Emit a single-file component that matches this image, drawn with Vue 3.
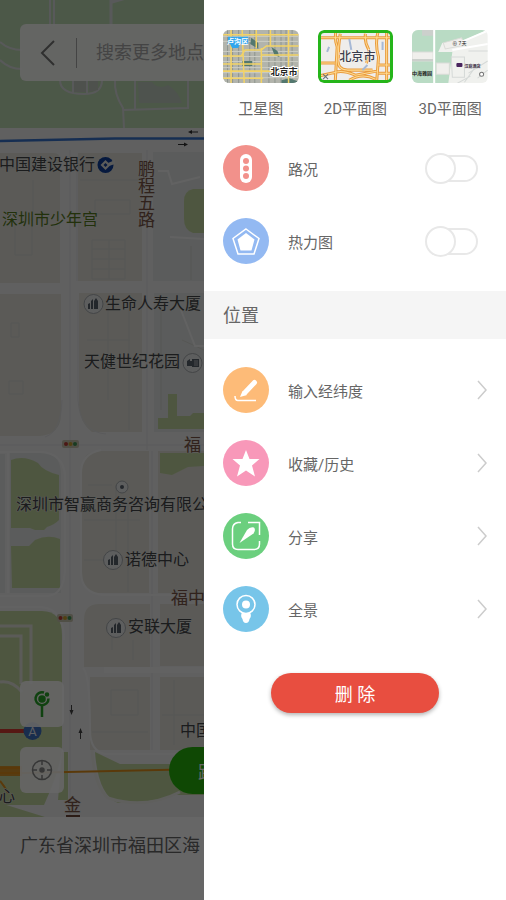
<script setup>
import { ref } from 'vue'

const layer = ref('flat')
const traffic = ref(false)
const heat = ref(false)

const satelliteGrid = {
  x: [4, 9, 15, 26, 31, 45, 51, 57, 62, 68],
  y: [6, 11, 21, 26, 31, 37, 42, 47]
}
</script>

<template>
  <div class="screen">
    <main class="map-pane">
      <div class="map-area">
        <svg class="map" role="img" aria-label="地图">
          <rect width="100%" height="100%" fill="#f0f0f1" />

          <g fill="#bedcb4">
            <rect width="100%" height="128" />
          </g>
          <g fill="none" stroke="#dddfe0" stroke-width="2">
            <path d="M50 0V26M54 0V26M0 42Q9 50 22 50M0 60Q9 69 22 69" />
            <path d="M111 0V26M112 2L126-2" stroke-width="3" />
            <path d="M60 80Q60 94 84 94Q102 94 102 80M73 80V93M87 80V93M135 80V109M115 80Q114 94 123 108L124 128M123 110L188 108V80" />
          </g>
          <path d="M138 82H152Q158 90 168 85Q178 91 182 103H139Z" fill="#c3cfc2" />
          <path d="M74 81H86V92H74ZM89 81H98V90L89 92Z" fill="#c4cac1" />
          <path d="M0 141L115 138.500H206" fill="none" stroke="#3974cc" stroke-width="2.500" />
          <g stroke="#333" fill="#333">
            <path d="M190 132H198M178 144.500H186" />
            <path d="M188 132l4-2v4ZM188 144.500l-4-2v4Z" stroke="none" />
          </g>

          <g fill="#e3e2d9">
            <path d="M0 153H54Q60 153 60 160V283H0ZM78 153H142V281H78Z" />
            <path d="M0 294H61V414Q61 434 40 436H0ZM79 293H142V432H92Q79 422 79 404Z" />
            <path d="M99 451H149V593H99Q82 593 82 573V470Q82 451 99 451Z" />
            <path d="M158 451H206V593H158ZM160 604H206V666H160ZM99 604H150V667H84V620Q84 604 99 604ZM90 677H150V750H90ZM160 677H206V750H160Z" />
          </g>
          <g fill="#e3e6e5">
            <path d="M153 152H206V281H153ZM154 293H206V432H154Z" />
            <path d="M10 453H45Q61 455 61 475V593H10ZM0 454H5V593H0Z" />
          </g>
          <g fill="#c4d8a0">
            <path d="M11 460Q24 455 38 463Q43 471 59 475V520Q54 525 47 527L44 530H35L30 528H11ZM11 546H29L35 540Q48 534 60 539V588H12Z" />
            <path d="M206 189H193Q184 191 184 201V219Q184 230 193 233H206Z" />
            <path d="M168 394H177V416H190L193 413H206V429H158V418H168ZM160 453H206V466L188 467L172 475L160 473Z" />
            <path d="M0 611H42Q62 611 62 635V745Q62 765 44 805H0Z" />
            <path d="M95 752L120 764H206V795H175Q150 803 118 803Q98 795 95 752ZM62 752H68V800H58ZM0 803L45 817H0Z" />
          </g>
          <path d="M0 626H31V684M0 636H21V684M0 682Q12 680 22 692" fill="none" stroke="#e3e4dd" stroke-width="3" />

          <g fill="none" stroke="#d7d8d3">
            <path d="M33 180V220H15V255H32V220M0 168H34M95 200H130V214H95ZM92 240H125V279H92ZM92 249H125M92 259H125M92 269H125M109 240V279M80 180H140" />
            <path d="M11 323H19V337H11ZM9 381H23V394H9ZM108 300V400M129 300V430M87 340H130" />
            <path d="M88 485H112M116 485V565M128 500V592M84 520H140M84 560H115" />
            <path d="M191 246V280M161 300V410M182 340L204 350" />
            <path d="M111 690H138V715H111ZM112 620V650M133 640V660M92 732H148M162 715H206M174 680V745" />
          </g>
          <g fill="none" stroke="#f5f5f6" stroke-width="2">
            <path d="M70 150V820M147 150V450M152 451V750M77 160V281M78 300V400Q80 432 106 434M62 400Q61 432 45 437M0 445H206" stroke="#e2e2e4" stroke-width="1" />
            <path d="M8 453V593M0 452H40Q63 453 65 475V570Q64 594 48 596H0M101 450Q81 454 81 473V572Q81 594 105 595H206" />
            <path d="M0 607H40Q64 608 64 640M83 668Q90 674 90 730Q90 751 105 754H206M158 171H168L172 184L200 177M170 237L206 239M181 310L195 346H206" />
            <path d="M104 670H206" stroke-width="6" stroke="#f4f4f5" />
          </g>
          <path d="M92 750Q94 786 108 798Q145 810 180 792" fill="none" stroke="#edeee9" stroke-width="3" />

          <g stroke="#444" fill="#444">
            <path d="M71.500 705V713M80.500 731V739" />
            <path d="M71.500 715l-2-5h4ZM80.500 728l-2 5h4Z" stroke="none" />
          </g>
          <path d="M0 771H22" stroke="#d9962c" stroke-width="10" />
          <path d="M0 768H22M0 773H22L206 769" fill="none" stroke="#e0901a" stroke-width="2" />
          <path d="M0 781Q5 787 8 793" fill="none" stroke="#e0901a" stroke-width="2" />
          <path d="M0 731H28" stroke="#d83c32" stroke-width="4" />
          <circle cx="32.500" cy="731" r="9" fill="#3f70c0" />
          <text x="32.500" y="736" class="marker">A</text>

          <g>
            <g fill="#c9c5ae">
              <rect x="62" y="440" width="17" height="8" rx="2" />
              <rect x="57" y="614" width="16" height="8" rx="2" />
            </g>
            <g fill="#bc3d35"><circle cx="66" cy="444" r="2" /><circle cx="60.500" cy="618" r="2" /></g>
            <g fill="#caa02d"><circle cx="70.500" cy="444" r="2" /><circle cx="65" cy="618" r="2" /></g>
            <g fill="#3f9455"><circle cx="75" cy="444" r="2" /><circle cx="69.500" cy="618" r="2" /></g>
          </g>

          <g fill="#e9eaec" stroke="#a8acb0">
            <circle cx="93.500" cy="304" r="9.500" />
            <circle cx="192.500" cy="363" r="9.500" />
            <circle cx="113" cy="560" r="9.500" />
            <circle cx="116" cy="628" r="9.500" />
            <circle cx="122" cy="487" r="6" />
          </g>
          <g fill="#59616d">
            <circle cx="122" cy="487" r="2" />
            <path d="M88 304l2-1v6h-2zM91 301l2-2v10h-2zM94 309v-8l2-3 2 3v8z" />
            <path d="M108 560l2-1v6h-2zM111 557l2-2v10h-2zM114 565v-8l2-3 2 3v8z" />
            <path d="M111 628l2-1v6h-2zM114 625l2-2v10h-2zM117 633v-8l2-3 2 3v8z" />
            <path d="M187 361l3-2v2h2v5h-5zM192 359h7v8h-7z" />
          </g>
          <path d="M194 361h4M194 363h4M194 365h4" stroke="#b9bdc1" />

          <g>
            <circle cx="105.500" cy="165" r="8" fill="#0f3f9c" />
            <path d="M105.500 160l5 5-5 5-5-5Z" fill="#e6e6e2" />
            <path d="M105.500 163l2 2-2 2-2-2Z" fill="#0f3f9c" />
            <path d="M108 163L115 160V164L109 166Z" fill="#e6e6e2" />
          </g>

          <g class="labels">
            <text x="-1" y="170">中国建设银行</text>
            <text x="2" y="225" class="park">深圳市少年宫</text>
            <text x="105" y="309">生命人寿大厦</text>
            <text x="84" y="367">天健世纪花园</text>
            <text x="16" y="510">深圳市智赢商务咨询有限公</text>
            <text x="125" y="565">诺德中心</text>
            <text x="128" y="632">安联大厦</text>
            <text x="180" y="736">中国</text>
            <text x="-1" y="802">心</text>
            <g class="street">
              <text x="145" y="160" class="vertical">鹏程五路</text>
              <text x="184" y="451" class="avenue">福</text>
              <text x="171" y="604" class="avenue">福中</text>
              <text x="64" y="811" class="avenue">金</text>
              <path d="M66 816H80" stroke="#6b4638" stroke-width="2" />
            </g>
          </g>
        </svg>

        <form class="search" @submit.prevent>
          <button class="back" type="button" aria-label="返回">
            <svg viewBox="0 0 16 26"><path d="M14 1L2 13L14 25" /></svg>
          </button>
          <input type="text" aria-label="搜索更多地点" placeholder="搜索更多地点" />
        </form>

        <div class="tools">
          <button type="button" aria-label="地点">
            <svg viewBox="0 0 24 30" class="pin">
              <path d="M14 3.500A6.500 6.500 0 1 0 18.500 9.500" />
              <circle cx="12" cy="10" r="2.500" class="fill" />
              <path d="M12 17V28" />
              <circle cx="17" cy="5.500" r="1" class="fill" />
            </svg>
          </button>
          <button type="button" aria-label="定位">
            <svg viewBox="0 0 24 24" class="locate">
              <circle cx="12" cy="12" r="9.500" />
              <circle cx="12" cy="12" r="2" class="fill" />
              <path d="M12 3V7M12 17V21M3 12H7M17 12H21" />
            </svg>
          </button>
        </div>
        <button type="button" class="route">路</button>
      </div>
      <p class="address">广东省深圳市福田区海</p>
      <div class="scrim"></div>
    </main>

    <aside class="drawer">
      <div class="layers">
        <button type="button" class="layer" :aria-pressed="layer === 'satellite'" @click="layer = 'satellite'">
          <span class="thumb" :class="{ active: layer === 'satellite' }">
            <svg viewBox="0 0 75 53" preserveAspectRatio="xMidYMid slice">
              <rect width="75" height="53" fill="#b2b4ac" />
              <g fill="#8f958f">
                <rect v-for="x in satelliteGrid.x" :key="x" :x="x" y="0" width="1" height="53" />
              </g>
              <g fill="#cccdc4">
                <rect v-for="y in satelliteGrid.y" :key="y" x="0" :y="y" width="75" height="1" />
              </g>
              <g fill="#53786f">
                <path d="M19 31h10v5h-10zM48 17l6 4 2 6-5-2zM58 50l8-2 8 3v2H58zM28 8l7 5v6l-8-5z" />
              </g>
              <g fill="none" stroke="#f3d366" stroke-width="1.500">
                <path d="M0 5H75M0 26H18L22 20H38L43 16H75M0 41H75M0 48H40M19 0L21 53M8 0V53M38 18V53M33 0V18M47 0V16M65 0V53M0 34H38M38 25H75" />
              </g>
              <path d="M5 7h20v7h-8l-2 4h-6l-2-4H5z" fill="#31a6ed" />
              <text x="4" y="14" class="tiny water">卢沟区</text>
              <text x="47" y="45" class="city">北京市</text>
            </svg>
          </span>
          卫星图
        </button>
        <button type="button" class="layer" :aria-pressed="layer === 'flat'" @click="layer = 'flat'">
          <span class="thumb" :class="{ active: layer === 'flat' }">
            <svg viewBox="0 0 75 53" preserveAspectRatio="xMidYMid slice">
              <rect width="75" height="53" fill="#efedeb" />
              <g fill="none" stroke="#e99b3e" stroke-width="3">
                <path d="M18 0Q16 9 19 17L17 53M3 8H75M0 33H17M0 46L18 42Q25 40 37 45L58 41M47 4Q46 12 50 19Q51 27 48 33M60 0Q56 13 60 27L58 53M22 4Q20 16 20 30Q19 39 29 40H54M68 0V53M60 35H75M60 43H75M31 50Q44 42 57 49" />
              </g>
              <g fill="none" stroke="#ffdb91" stroke-width="1">
                <path d="M18 0Q16 9 19 17L17 53M3 8H75M0 33H17M0 46L18 42Q25 40 37 45L58 41M47 4Q46 12 50 19Q51 27 48 33M60 0Q56 13 60 27L58 53M22 4Q20 16 20 30Q19 39 29 40H54M68 0V53M60 35H75M60 43H75M31 50Q44 42 57 49" />
              </g>
              <path d="M31 9l2 11M49 35l-5 5M11 17l-2 5M64 12v8" stroke="#a6b8d5" stroke-width="2" />
              <path d="M5 44l5 5m0-5l-5 5" stroke="#687078" />
              <text x="39" y="31" class="capital">北京市</text>
            </svg>
          </span>
          2D平面图
        </button>
        <button type="button" class="layer" :aria-pressed="layer === 'solid'" @click="layer = 'solid'">
          <span class="thumb" :class="{ active: layer === 'solid' }">
            <svg viewBox="0 0 75 53" preserveAspectRatio="xMidYMid slice">
              <rect width="75" height="53" fill="#f0f1ee" />
              <path d="M0 0H75L53 10L30 13L26 22H40L36 53H0Z" fill="#b9dbc4" />
              <path d="M0 22H21V31H0ZM24 33H37V44H24ZM31 13L49 8L53 15L33 19Z" fill="#f0efec" stroke="#dadbd7" />
              <path d="M10 0H22V6H10ZM0 31H21V29H0Z" fill="#ccd0cc" />
              <g fill="none" stroke="#fff" stroke-width="2"><path d="M22 0V53M49 12L75 1M40 20L75 14" /></g>
              <g fill="none" stroke="#d5d9d7"><path d="M39 27H52V47H40ZM56 21H75M56 43L75 31M52 52L62 38M65 48L75 40M45 53L58 46" /></g>
              <rect x="44" y="33" width="6" height="4" rx="1" fill="#49255e" />
              <text x="40" y="15" class="tiny">⊕ 7天</text>
              <text x="52" y="38" class="micro">汉庭酒店</text>
              <text x="0" y="45" class="tiny estate">中海雅园</text>
              <circle cx="69" cy="44" r="2" fill="#fff" stroke="#777" />
            </svg>
          </span>
          3D平面图
        </button>
      </div>

      <ul class="list switches">
        <li>
          <label class="row">
            <svg class="icon red" viewBox="0 0 46 46">
              <rect x="17" y="9" width="12" height="29" rx="6" fill="#fff" />
              <g class="hole"><circle cx="23" cy="16" r="3" /><circle cx="23" cy="23.500" r="3" /><circle cx="23" cy="31" r="3" /></g>
            </svg>
            <span class="name">路况</span>
            <input v-model="traffic" class="toggle" type="checkbox" role="switch" />
          </label>
        </li>
        <li>
          <label class="row">
            <svg class="icon blue" viewBox="0 0 46 46">
              <path d="M23 11L36 20.500L31 36H15L10 20.500Z" fill="none" stroke="#fff" stroke-width="1.500" />
              <path d="M23 15L31.500 21.500L28.500 32.500H17.500L14.500 21.500Z" fill="#fff" />
            </svg>
            <span class="name">热力图</span>
            <input v-model="heat" class="toggle" type="checkbox" role="switch" />
          </label>
        </li>
      </ul>

      <h2 class="section">位置</h2>

      <ul class="list links">
        <li>
          <button type="button" class="row">
            <svg class="icon orange" viewBox="0 0 46 46">
              <path d="M22 25.500L31.500 15.500" fill="none" stroke="#fff" stroke-width="5" stroke-linecap="round" />
              <path d="M19.500 24L24 28L17 30Z" fill="#fff" />
              <path d="M12 29Q12 33.500 15 33.500H33" fill="none" stroke="#fff" stroke-width="1.500" />
            </svg>
            <span class="name">输入经纬度</span>
            <svg class="arrow" viewBox="0 0 10 20"><path d="M1 1L9 10L1 19" /></svg>
          </button>
        </li>
        <li>
          <button type="button" class="row">
            <svg class="icon pink" viewBox="0 0 46 46">
              <path d="M23 10L26.500 19H36.500L29 25.500L32 36.500L23 30.500L14 36.500L17 25.500L9.500 19H19.500Z" fill="#fff" />
            </svg>
            <span class="name">收藏/历史</span>
            <svg class="arrow" viewBox="0 0 10 20"><path d="M1 1L9 10L1 19" /></svg>
          </button>
        </li>
        <li>
          <button type="button" class="row">
            <svg class="icon green" viewBox="0 0 46 46">
              <path d="M18 9.500H15Q9.500 10.500 9.500 16V31Q9.500 36.500 15 36.500H31Q36.500 36.500 36.500 31V28M36.500 22V9.500H25" fill="none" stroke="#fff" stroke-width="1.500" />
              <path d="M16.500 30L24 17Q27 13.500 31 14.500Q33 17 30.500 20.500Z" fill="#fff" />
            </svg>
            <span class="name">分享</span>
            <svg class="arrow" viewBox="0 0 10 20"><path d="M1 1L9 10L1 19" /></svg>
          </button>
        </li>
        <li>
          <button type="button" class="row">
            <svg class="icon sky" viewBox="0 0 46 46">
              <circle cx="23" cy="18.500" r="9" fill="none" stroke="#fff" stroke-width="1.500" />
              <circle cx="23" cy="18.500" r="4" fill="#fff" />
              <path d="M19 26.500Q23 29 27 26.500Q29 30 26.500 33Q26 37 23 37Q20 37 19.500 33Q17 30 19 26.500Z" fill="#fff" />
            </svg>
            <span class="name">全景</span>
            <svg class="arrow" viewBox="0 0 10 20"><path d="M1 1L9 10L1 19" /></svg>
          </button>
        </li>
      </ul>

      <button type="button" class="delete">删 除</button>
    </aside>
  </div>
</template>

<style>
body {
  margin: 0;
}
</style>

<style scoped>
.screen {
  display: grid;
  grid-template-columns: 204px minmax(0, 1fr);
  min-height: 100vh;
  font-family: Roboto, "Noto Sans CJK SC", sans-serif;
  font-size: 15px;
  color: #666;
}

button,
input {
  font: inherit;
  color: inherit;
}

button {
  padding: 0;
  border: 0;
  background: none;
  cursor: pointer;
}

.map-pane {
  position: relative;
  display: flex;
  flex-direction: column;
  overflow: hidden;
  background: #fff;
}

.map-area {
  position: relative;
  flex: 1;
}

.map {
  position: absolute;
  inset: 0;
  width: 100%;
  height: 100%;
}

.labels {
  font-size: 16px;
  fill: #444649;
  stroke: #e6e6e2;
  stroke-width: 1px;
  paint-order: stroke;
}

.labels .park {
  fill: #567a1c;
}

.street {
  fill: #7b5647;
}

.avenue {
  font-size: 17px;
}

.vertical {
  font-size: 17px;
  writing-mode: vertical-rl;
}

.marker {
  font-size: 13px;
  fill: #e8eaf0;
  text-anchor: middle;
}

.search {
  position: absolute;
  top: 24px;
  left: 20px;
  right: -20px;
  display: flex;
  align-items: center;
  height: 57px;
  border-radius: 6px;
  background: rgba(255, 255, 255, 0.9);
}

.back {
  display: flex;
  align-items: center;
  justify-content: center;
  width: 57px;
  height: 30px;
  border-right: 1px solid #aaa;
}

.back svg {
  width: 16px;
  height: 26px;
  fill: none;
  stroke: #777;
  stroke-width: 2;
}

.search input {
  flex: 1;
  min-width: 0;
  padding: 0 0 0 19px;
  border: 0;
  outline: 0;
  background: none;
  font-size: 18px;
}

.search input::placeholder {
  color: #aaa;
  opacity: 1;
}

.tools {
  position: absolute;
  left: 20px;
  bottom: 24px;
  display: grid;
  gap: 20px;
}

.tools button {
  display: flex;
  align-items: center;
  justify-content: center;
  width: 44px;
  height: 46px;
  border-radius: 6px;
  background: rgba(255, 255, 255, 0.9);
}

.tools svg {
  fill: none;
  stroke: currentColor;
}

.tools .fill {
  fill: currentColor;
}

.pin {
  width: 24px;
  height: 30px;
  color: #2aa52a;
  stroke-width: 2.5;
}

.locate {
  width: 24px;
  height: 24px;
  color: #888;
  stroke-width: 1.5;
}

.route {
  position: absolute;
  left: 169px;
  right: -60px;
  bottom: 23px;
  height: 47px;
  padding-left: 29px;
  border-radius: 24px;
  background: #26b50c;
  color: #fff;
  font-size: 18px;
  text-align: left;
}

.address {
  margin: 0;
  padding: 15px 0 41px 20px;
  background: #fff;
  color: #666;
  font-size: 18px;
  line-height: 27px;
  white-space: nowrap;
}

.scrim {
  position: absolute;
  inset: 0;
  background: rgba(0, 0, 0, 0.6);
}

.drawer {
  display: flex;
  flex-direction: column;
  background: #fff;
}

.layers {
  display: grid;
  grid-template-columns: repeat(3, 1fr);
  gap: 19px;
  padding: 30px 18px 0 19px;
}

.layer {
  display: grid;
  gap: 14px;
  line-height: 24px;
  white-space: nowrap;
  justify-items: center;
}

.thumb {
  box-sizing: border-box;
  position: relative;
  width: 100%;
  height: 53px;
  border-radius: 6px;
  overflow: hidden;
}

.thumb svg {
  display: block;
  width: 100%;
  height: 100%;
}

.thumb.active::after {
  content: "";
  position: absolute;
  inset: 0;
  border: 3px solid #25b51a;
  border-radius: 6px;
}

.capital {
  font-size: 12px;
  font-weight: 500;
  text-anchor: middle;
  fill: #3c3d4b;
  stroke: #f5f3f0;
  stroke-width: 1px;
  paint-order: stroke;
}

.city {
  font-size: 9px;
  font-weight: 700;
  fill: #222;
  stroke: #fff;
  stroke-width: 2px;
  paint-order: stroke;
}

.tiny {
  font-size: 5px;
  fill: #222;
}

.tiny.water {
  font-size: 7px;
  font-weight: 700;
  fill: #fff;
}

.tiny.estate {
  font-weight: 700;
}

.micro {
  font-size: 4px;
  font-weight: 700;
  fill: #34263b;
}

.list {
  display: grid;
  gap: 27px;
  margin: 0;
  padding: 0 19px;
  list-style: none;
}

.switches {
  padding-top: 24px;
  padding-bottom: 27px;
}

.links {
  padding-top: 28px;
  padding-bottom: 41px;
}

.row {
  display: flex;
  align-items: center;
  width: 100%;
  height: 46px;
  text-align: left;
}

.icon {
  width: 46px;
  height: 46px;
  border-radius: 50%;
}

.red {
  background: #f2918b;
}

.hole {
  fill: #f2918b;
}

.blue {
  background: #93b9f2;
}

.orange {
  background: #fdbb78;
}

.pink {
  background: #f898b9;
}

.green {
  background: #6bcf7e;
}

.sky {
  background: #77c5e9;
}

.name {
  flex: 1;
  margin-left: 19px;
}

.arrow {
  width: 10px;
  height: 20px;
  fill: none;
  stroke: #ccc;
  stroke-width: 1.5;
}

.toggle {
  appearance: none;
  position: relative;
  width: 53px;
  height: 31px;
  margin: 0 9px 0 0;
}

.toggle::before,
.toggle::after {
  content: "";
  position: absolute;
  box-sizing: border-box;
  border: 2px solid #e8e8e8;
  background: #fff;
}

.toggle::before {
  inset: 2px 0 2px 4px;
  border-radius: 14px;
}

.toggle::after {
  top: 0;
  left: 0;
  width: 31px;
  height: 31px;
  border-radius: 50%;
}

.toggle:checked::before {
  background: #25b51a;
}

.toggle:checked::after {
  left: 22px;
}

.section {
  margin: 0;
  padding: 1px 19px 0;
  background: #f5f5f5;
  font-size: 18px;
  font-weight: 400;
  line-height: 47px;
}

.delete {
  align-self: center;
  width: 168px;
  height: 40px;
  border-radius: 20px;
  background: #e84e40;
  box-shadow: 0 2px 4px rgba(0, 0, 0, 0.3);
  color: #fff;
  font-size: 18px;
}
</style>
